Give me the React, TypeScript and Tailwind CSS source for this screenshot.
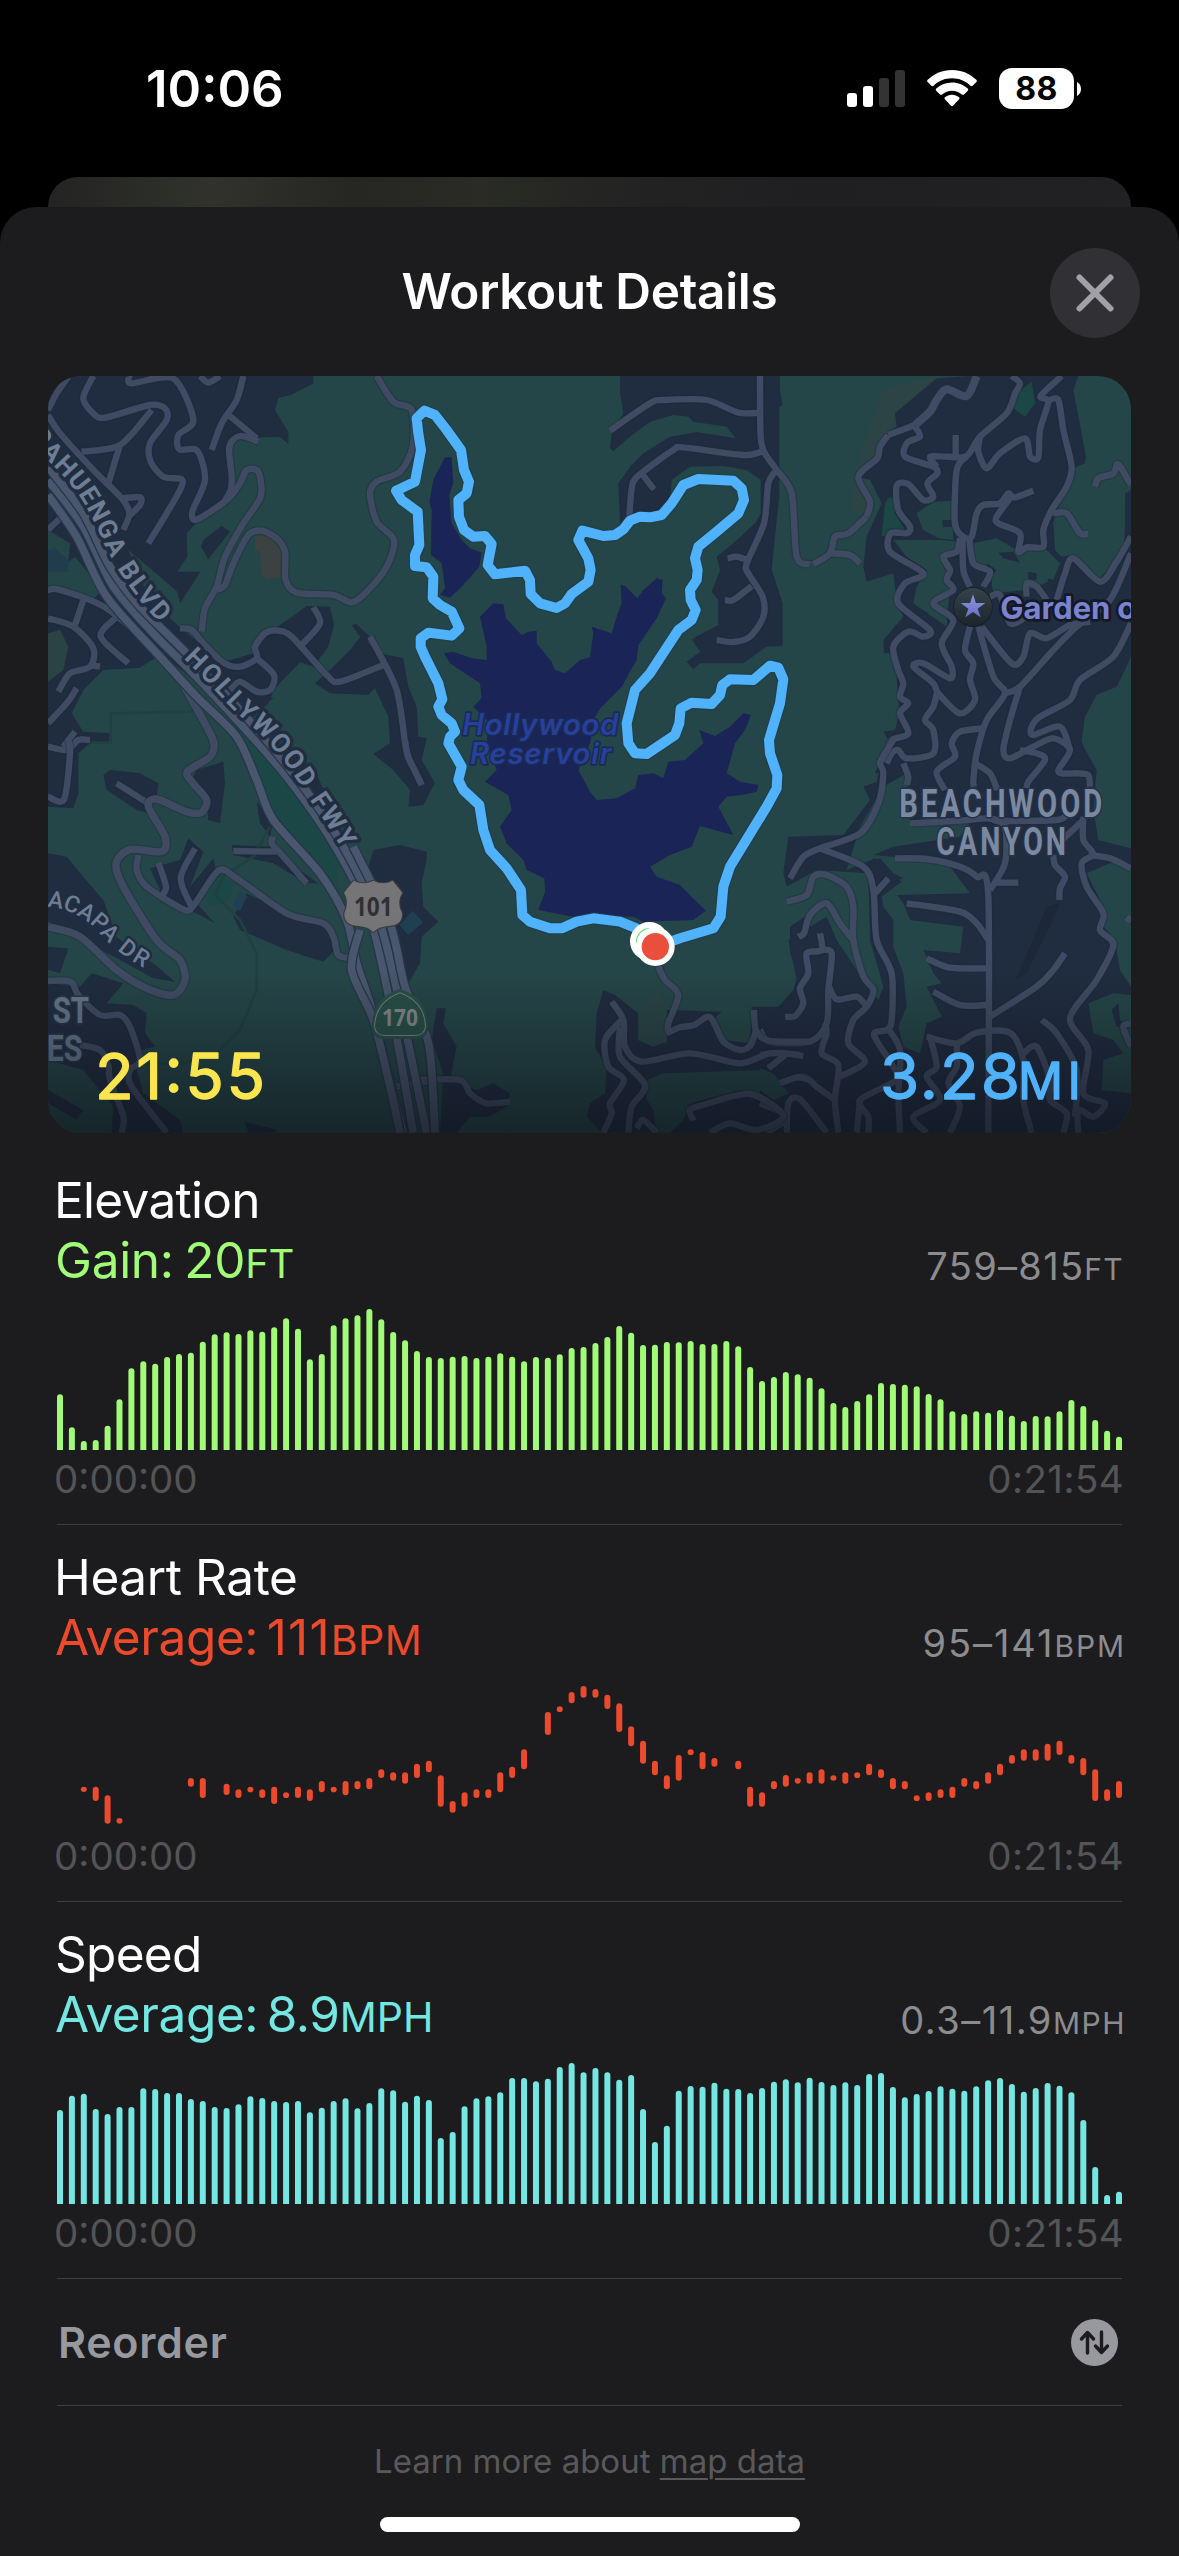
import type { ReactNode } from 'react';

/* ---------- chart data (pixels) ---------- */

const CHART_H = 141;
const STEP = 1059 / 89;

const elevation = [
  703, 802, 843, 840, 797, 718, 625, 604, 611, 591, 582, 578, 545, 523, 517, 522, 511, 515, 502, 475, 506, 598, 582,
  496, 475, 466, 447, 478, 516, 541, 573, 591, 594, 590, 588, 594, 590, 580, 590, 604, 591, 593, 583, 564, 561, 549,
  531, 498, 518, 555, 554, 546, 547, 543, 552, 552, 543, 559, 621, 663, 651, 636, 643, 653, 685, 729, 741, 723, 703,
  669, 672, 674, 679, 702, 718, 754, 762, 754, 758, 750, 767, 783, 768, 769, 754, 720, 738, 780, 812, 830,
].map((v, i) => [i, (v - 447) / 3, CHART_H]);

const speed = [
  600, 557, 551, 597, 612, 591, 591, 535, 537, 549, 549, 567, 573, 591, 594, 583, 559, 564, 573, 576, 573, 607, 593,
  573, 565, 595, 579, 535, 541, 575, 557, 570, 684, 666, 589, 565, 559, 547, 504, 504, 514, 506, 471, 459, 487, 474,
  487, 509, 495, 597, 696, 647, 542, 528, 530, 518, 536, 537, 549, 534, 515, 508, 517, 503, 516, 525, 517, 525, 492,
  489, 531, 562, 552, 543, 529, 536, 542, 529, 511, 504, 522, 545, 534, 519, 527, 547, 630, 771, 855, 845,
].map((v, i) => [i, (v - 459) / 3, CHART_H]);

const heart = [
  [2, 740, 756], [3, 740, 783], [4, 766, 851], [5, 834, 851], [11, 714, 740], [12, 714, 774], [14, 731, 765],
  [15, 748, 774], [16, 740, 757], [17, 748, 774], [18, 740, 792], [19, 757, 774], [20, 740, 774], [21, 748, 783],
  [22, 723, 757], [23, 740, 757], [24, 723, 766], [25, 723, 748], [26, 714, 748], [27, 688, 714], [28, 697, 722],
  [29, 697, 731], [30, 671, 714], [31, 662, 697], [32, 706, 800], [33, 783, 818], [34, 757, 800], [35, 748, 774],
  [36, 748, 774], [37, 697, 757], [38, 680, 714], [39, 628, 688], [41, 516, 585], [42, 499, 516], [43, 456, 490],
  [44, 438, 473], [45, 447, 473], [46, 464, 507], [47, 490, 576], [48, 559, 619], [49, 602, 671], [50, 662, 706],
  [51, 706, 748], [52, 645, 722], [53, 628, 645], [54, 636, 688], [55, 654, 680], [57, 662, 688], [58, 740, 800],
  [59, 757, 800], [60, 723, 748], [61, 705, 740], [62, 714, 731], [63, 697, 731], [64, 688, 731], [65, 706, 722],
  [66, 697, 731], [67, 697, 714], [68, 671, 706], [69, 688, 714], [70, 714, 748], [71, 723, 748], [72, 766, 783],
  [73, 757, 783], [74, 748, 774], [75, 740, 774], [76, 714, 740], [77, 723, 748], [78, 697, 731], [79, 671, 706],
  [80, 645, 671], [81, 628, 662], [82, 628, 662], [83, 611, 662], [84, 602, 645], [85, 645, 671], [86, 654, 706],
  [87, 688, 783], [88, 748, 783], [89, 723, 774],
].map(([i, a, b]) => [i, (a - 438) / 3, (b - 438) / 3]);

/* Rounded top bars that stand on the base line, or free floating capsules. */
function Bars({ data, color, floating }: { data: number[][]; color: string; floating?: boolean }) {
  return (
    <svg width="1065" height={CHART_H} viewBox={`0 0 1065 ${CHART_H}`} className="block overflow-hidden" fill={color}>
      {data.map(([i, top, bottom]) => (
        <rect key={i} x={i * STEP} y={top} width="6" height={bottom - top + (floating ? 0 : 6)} rx="3" />
      ))}
    </svg>
  );
}

/* ---------- map ---------- */

/* Catmull-Rom curve through a flat list of coordinates. */
function curve(points: string) {
  const n = points.trim().split(/\s+/).map(Number);
  const p: number[][] = [];
  for (let i = 0; i < n.length; i += 2) p.push([n[i], n[i + 1]]);
  let d = `M${p[0][0]} ${p[0][1]}`;
  const k = 7;
  for (let i = 0; i < p.length - 1; i++) {
    const a = p[i - 1] || p[i];
    const b = p[i];
    const c = p[i + 1];
    const e = p[i + 2] || c;
    d += `C${b[0] + (c[0] - a[0]) / k} ${b[1] + (c[1] - a[1]) / k} ${c[0] - (e[0] - b[0]) / k} ${c[1] - (e[1] - b[1]) / k} ${c[0]} ${c[1]}`;
  }
  return d;
}

function Tile({ x, y, children }: { x: number; y: number; children: ReactNode }) {
  return <g transform={`translate(${x} ${y}) scale(0.33333)`}>{children}</g>;
}

function Roads({ list, w = 19 }: { list: string[]; w?: number }) {
  return (
    <>
      {list.map((r, i) => (
        <path key={`s${i}`} d={curve(r)} stroke="#1a2c3c" strokeOpacity="0.35" strokeWidth={w + 8} />
      ))}
      {list.map((r, i) => (
        <path key={i} d={curve(r)} stroke="#404b63" strokeWidth={w} />
      ))}
    </>
  );
}

const NAVY = '#202c40';
const GREEN = '#254648';
const PARK = '#1b4747';

const roadsNW = [
  '24 120 50 70 85 20',
  '24 135 60 190 160 300 245 385 268 430 250 480',
  '160 18 130 85 165 135 200 142 330 105 375 115 380 150 330 220 332 275 370 320 425 328 420 360 380 430 325 520',
  '268 18 275 40 400 25 460 150 415 195 418 238 472 242 495 330 457 425 472 448 560 390 600 340 620 300 655 305 662 380 610 460 555 560 530 650 495 715 485 785',
  '610 18 590 90 545 160 515 240',
  '560 130 650 205',
  '655 215 600 198 568 230 575 320 572 360 550 400',
  '480 18 505 38 540 18',
  '335 120 240 225 125 245',
  '240 225 205 340',
  '245 385 300 382 300 405 265 440',
  '530 660 555 645 580 580 625 495 665 482 710 505 735 545 737 630 770 668 880 675 935 697 980 665 1040 590 1062 510 1010 455 990 370 1010 335 1080 305 1118 230 1115 120 1060 95 1010 18',
  '24 660 60 660 200 715 370 860',
  '24 745 100 770 160 835 150 890 90 910 55 965',
  '130 690 105 765',
  '225 745 182 800 265 880',
  '150 885 180 890',
  '24 1060 80 1000 110 955',
  '24 1130 80 1140 115 1110 150 1110',
  '70 1130 105 1085',
  '24 480 65 440',
  '420 775 455 780 490 820 550 878 600 890 650 865 645 830 675 790 715 782 755 800 860 915 900 935 1030 885',
  '650 865 702 915 690 960 650 965 600 935 570 960',
  '785 825 840 760 820 712',
  '990 800 1070 960 1100 1150 1125 1200 1145 1245',
];

const roadsN = [
  '1110 18 1112 200 1125 250 1160 300 1205 370 1220 560 1260 583',
  '660 182 780 100 820 90 950 90 1045 128 1110 128',
  '718 440 728 340 760 305 850 240 880 232 1060 255 1115 245',
  '755 310 792 358',
  '1160 300 1135 340 1122 460 1070 580 1075 610 1118 680 1120 740 1080 800 1030 816 980 810',
  '1013 565 1040 560 1072 570',
  '1085 648 1030 690 1005 690',
];

const roadsNE = [
  '385 195 465 165',
  '320 440 330 395 295 320 352 265 360 230 385 195',
  '160 583 210 550 225 500 265 490 320 440',
  '215 550 270 555 300 580',
  '465 170 480 200 442 218 435 260 520 290 532 310 502 340 520 380 490 390 445 342 410 347 415 420 450 470 440 490 392 490 390 545 490 610 435 640 415 700 510 780 490 800 445 785 400 830 415 900 430 940 420 980 445 1000 420 1030 445 1090 395 1110 380 1150 355 1180',
  '530 290 510 260 560 260 620 258 660 200 740 130 765 70 780 40 755 18',
  '587 195 587 255',
  '620 260 590 300 585 460 610 500 635 500 650 430 670 405 720 400 745 370 765 382 820 362',
  '660 200 655 245 680 295 720 250 795 205 810 260 835 262 840 180 865 95 842 78 905 18',
  '865 92 895 90 910 180 935 290 920 350 875 420 850 480 850 530 800 532 775 545 780 490 715 460 710 440 750 385',
  '880 430 920 430 960 490 985 490',
  '1005 350 1015 325 1060 310 1075 283 1113 345',
  '1113 500 1070 575 1020 635 940 565 915 610 890 690',
  '1113 550 1050 690 950 770 880 840 780 950 735 970',
  '600 505 590 545 550 560 570 600 560 630 580 660 520 700 580 750 545 820 575 890 570 925 490 880 460 890 520 940 535 970 600 1030 645 990 630 930 640 880 615 840 630 770',
  '608 505 610 600 630 650',
  '628 505 640 580 690 605 670 650',
  '690 680 720 675 750 760 800 740',
  '800 680 800 640 830 650 860 690',
  '655 770 700 920 735 970 680 1050 650 1150 640 1230 642 1250',
  '665 770 755 880 790 860 810 790 860 805 930 765 990 755',
  '780 950 750 1050 730 1140 750 1165 820 1130 880 1105 930 1140 895 1205 955 1210 985 1215 990 1250',
  '1113 760 1060 860 960 930 930 990 840 1040 815 1070 820 1095 900 1070 930 1140',
  '530 970 520 1010 495 1050 520 1080 520 1150 440 1165 415 1140 395 1150 380 1180',
  '670 1075 600 1085 575 1120 585 1160 530 1205 555 1260',
  '430 1180 445 1220 440 1245',
  '780 1140 830 1150 855 1170 805 1235 800 1255',
  '645 1180 690 1210 712 1260',
];

const roadsSE = [
  '400 0 375 40 360 70 370 100 355 190 300 280 180 325 130 350 90 415',
  '180 325 310 380 340 450 350 600 395 700 395 840 380 870 342 885 400 980 410 1020 300 1080 325 1130 325 1178',
  '345 460 385 415',
  '80 485 140 465 160 410 200 405 260 440 280 500 280 600 310 710 340 750 320 800 280 840 265 910 315 965 240 1010',
  '115 590 132 580 150 525 200 490 240 550 280 600',
  '180 580 185 630 140 640 145 700 120 745 130 790 105 828 75 830',
  '185 630 215 640 205 750 200 850 150 905 30 905 0 870',
  '205 735 230 778 290 770 320 800',
  '195 850 200 880 185 940 235 975 225 1080 235 1178',
  '60 1030 130 1010 170 1040 225 1080',
  '80 1178 85 1090 120 1078 200 1178',
  '0 1090 80 1130 20 1178',
  '0 945 60 938 130 948',
  '380 860 420 930 415 1060 420 1178',
  '300 1080 290 1178',
  '405 355 500 357 600 380 650 410 685 470 685 1178',
  '440 490 600 515 650 550 685 600',
  '500 655 570 683 685 685',
  '520 755 600 795 685 795',
  '690 830 830 740 880 690 915 640',
  '690 450 735 370 735 260 700 240',
  '700 428 775 428',
  '450 250 600 242 680 235 735 243 890 240 920 225',
  '880 345 885 375 915 410 900 445 898 480',
  '970 230 970 300 1000 342 965 370 980 440 1030 520 1020 570 1060 615 1010 720 930 835 985 930 970 1060 1035 1090 1000 1130 955 1110 955 1178',
  '985 345 1050 355 1113 385',
  '965 245 885 320',
  '845 840 890 880 950 990 945 1130',
  '500 890 590 910 650 878 750 878 790 960 790 1080 815 1178',
  '790 940 830 920 870 1020 870 1080 920 1120 910 1178',
  '510 890 530 980 500 1010 540 1080 460 1130 500 1178',
  '590 910 590 980 565 1030 600 1100 570 1178',
  '1113 530 1100 545',
  '1113 920 1090 860 1113 850',
];

const roadsS = [
  '805 680 825 720 865 765 835 850 835 878',
  '830 880 870 862 910 856 960 832 1000 905 1050 930 1082 915 1098 870',
  '1092 810 1098 870 1135 902 1260 905',
  '665 785 700 840 705 920 755 965 900 940 1050 970 1140 940 1230 945',
  '695 840 645 900 655 980 702 1020 660 1090 665 1120 640 1178',
  '690 860 690 950 765 1035 725 1100 715 1178',
  '1185 945 1135 985',
  '910 1142 900 1110 940 1095 1080 1062 1180 1128 1100 1170 1020 1150 960 1178',
  '740 1165 760 1140 800 1178',
  '1170 1030 1220 1012 1260 1020',
];

const roadsSW = [
  '230 130 325 190',
  '295 345 290 390 320 440 430 508 460 498 535 392 590 415 740 520 850 550 880 590 895 645 935 655',
  '355 368 378 440 365 470',
  '465 325 422 415 455 500',
  '580 333 710 335',
  '700 290 695 310 730 350 800 430',
  '24 723 92 725 115 765 180 825 240 825 270 860 300 960 270 990 275 1040 380 1178',
  '120 915 180 930 205 975 210 1020 250 1130 245 1178',
  '24 170 72 178 90 40 85 0',
  '1035 1045 1190 1020',
  '1125 1020 1260 1020 1290 1060 1340 1090 1410 1085',
];

const ROUTE =
  'M780 1715L740 1675L690 1655L610 1645L560 1655L515 1675L480 1675L420 1655L397 1635L393 1560L350 1495L300 1440L280 1380L268 1305L220 1260L205 1230L215 1190L175 1120L180 1100L195 1085L185 1060L155 1035L145 1010L157 988L145 940L105 860L92 830L92 805L115 788L185 797L208 775L185 725L150 705L128 685L130 620L110 592L75 588L75 555L88 525L83 425L35 390L18 362L75 335L93 240L85 190L80 145L103 122L135 135L170 180L213 240L222 300L237 335L230 370L205 390L207 440L222 480L250 500L285 498L305 522L293 585L315 613L405 602L420 630L422 672L450 700L500 714L525 700L545 672L595 635L602 600L595 565L565 510L577 482L640 498L675 495L700 478L720 452L750 440L780 442L815 435L845 400L880 345L925 327L1030 332L1055 355L1062 390L1045 430L980 485L925 530L915 565L923 600L920 630L900 660L902 690L917 720L905 750L865 780L780 910L735 960L710 1060L715 1120L735 1150L770 1152L855 1095L868 1060L872 1015L905 998L965 1002L990 975L997 945L1020 928L1090 930L1140 887L1165 893L1180 928L1170 1000L1137 1110L1140 1150L1162 1215L1160 1255L1130 1310L1020 1490L1000 1550L992 1640L970 1675L870 1705L800 1730';

function MapView() {
  return (
    <svg viewBox="48 376 1083 757" className="block h-[757px] w-[1083px] rounded-[33px]">
      <defs>
        <linearGradient id="fade" x1="0" y1="0" x2="0" y2="1">
          <stop offset="0" stopColor="#0b0f16" stopOpacity="0" />
          <stop offset="1" stopColor="#0b0f16" stopOpacity="0.58" />
        </linearGradient>
        <linearGradient id="star" x1="0" y1="0" x2="0" y2="1">
          <stop offset="0" stopColor="#9095da" />
          <stop offset="1" stopColor="#656fc8" />
        </linearGradient>
        <linearGradient id="pin" x1="0" y1="0" x2="0" y2="1">
          <stop offset="0" stopColor="#36434b" />
          <stop offset="1" stopColor="#1b2429" />
        </linearGradient>
        <path id="cahuenga" d={curve('-8 175 20 225 70 278 110 322 145 368 175 420 205 480 228 530 268 600 300 645 335 690 378 738 400 765')} />
        <path id="hollywood" d={curve('450 845 470 865 520 915 585 985 625 1022 680 1072 725 1122 770 1178 805 1232 850 1300 885 1350 925 1415 950 1465')} />
        <path id="acapa" d={curve('25 478 50 480 95 492 140 515 180 545 215 583 270 630 320 662 350 685')} />
      </defs>

      <rect x="48" y="376" width="1083" height="757" fill={GREEN} />

      {/* residential land */}
      <Tile x={40} y={370}>
        <g fill={NAVY}>
          <path d="M24 18H820V40L760 72L715 85L705 120L745 185V222L720 200L600 205L570 230L575 340L560 390L520 430L470 458L440 490L442 560L412 605H482L420 700L412 665L365 625L265 540L330 690L440 790L520 850L600 930L700 985L620 1040L700 1120L820 1190L930 1440L960 1480L900 1480L780 1290L640 1110L500 960L360 850L240 760L160 690L185 660L105 560L85 575L90 520L24 480Z" />
          <path d="M24 655L185 690L350 860L300 893L190 900L130 960L95 1030L130 1085L210 1090L205 1118L150 1120L115 1150V1270L100 1315L24 1310Z" />
          <path d="M490 510L545 467L570 485L505 568L483 530Z" />
          <path d="M540 880L640 850L690 785L750 745L800 708L870 710L882 765L865 830L820 890L780 877L700 960L685 1000L620 1060L540 960Z" />
          <path d="M935 765L950 762L990 800L985 820L1020 850L1090 865L1105 950L1130 1010L1135 1100L1160 1105L1145 1170L1185 1240L1150 1305L1105 1310L1110 1260L1060 1200L1000 1152L1050 1120L1045 1040L1005 955L985 975L870 970L825 940L870 900L935 835L960 800Z" />
        </g>
        <path d="M24 790L60 780L85 830L70 900L24 935Z" fill="#2a4446" />
        <path d="M24 540L45 535L85 570V605H24Z" fill="#213c4d" />
        <path d="M645 498L690 497L725 545L722 620L680 630L665 610L660 545L645 540Z" fill="#3c4242" />
      </Tile>
      <Tile x={390} y={370}>
        <g fill={NAVY}>
          <path d="M690 18H1170V60L1178 105L1168 110V380L1160 450L1145 600L1155 630L1178 700V828L1130 830L1060 880H930L910 898L890 875L930 845L905 808L985 765V690L965 665L990 600L980 560L1030 520L1095 460L1112 430V330L1070 300L1000 288L900 290L845 330L840 400L800 450L690 460L685 340L720 290L760 250L840 200L920 186L1037 205L1010 170L910 155L895 140L850 135L780 155L720 200L670 243L660 235L665 190L700 130L690 70Z" />
        </g>
        <g fill="#1a2456">
          <path d="M165 262H185L190 340L178 375L185 460L215 510L240 535L275 548L268 590L215 650L180 683L150 675L165 655L155 580L123 555L125 420L118 395L130 330L145 300Z" />
          <path d="M310 700L340 703L348 745L395 795L415 785L440 782V820L485 875L495 900L525 910L570 870L600 862L610 790L605 770L665 790L680 740L695 700L692 645L705 648L742 685L760 660L800 625L818 630L815 670L828 685L800 745L745 825L740 870L695 950L635 1010L615 1040L600 1120L565 1200L600 1265L620 1290L680 1285L735 1255L745 1215L790 1210L820 1225L835 1175L885 1170L940 1120L928 1080L975 1098L1020 1070L1060 1030L1083 1035L1065 1080L1035 1120L1010 1210L1050 1235L1105 1245L1100 1265L1055 1275L1010 1280L985 1310L1030 1395L1010 1390L930 1368L905 1430L840 1455L780 1490L800 1520L870 1545L905 1580L948 1622L910 1650L760 1655L730 1640L550 1640L445 1620L465 1565L463 1525L410 1500L400 1470L350 1420L330 1370L365 1320L355 1275L285 1235L320 1200L290 1110L300 1060L250 1010L275 985L270 940L180 880L162 850L190 845L245 865L290 870V830L270 740Z" />
        </g>
      </Tile>
      <Tile x={760} y={370}>
        <path d="M370 60L530 18L410 130L350 260L320 440L270 420L300 250Z" fill="#2c4446" />
        <g fill={NAVY}>
          <path d="M530 25L630 18H955L940 60L965 190L978 260L975 280L940 295L925 350L890 420L880 460L885 540L905 560L940 555L1010 640L1050 590L1090 560L1095 470V370L1113 360V860L1095 900L1070 950L1010 975L975 1040L965 1110L985 1210H345L385 1110L370 1085L405 1080L418 1030L405 850L372 850L370 810L430 740L410 690L400 610L320 635L310 590L320 500L365 400L330 330L290 320L350 260L380 190L410 170L405 130Z" />
        </g>
        <g fill={GREEN}>
          <path d="M470 430L520 395L575 392L580 510L535 505L490 480Z" />
          <path d="M400 510L545 510L600 515L590 540L545 560L570 640L560 770L460 700L470 650L500 600L440 560Z" />
          <path d="M640 520L710 505L770 540L850 530L900 580L880 630L800 660L700 670L690 600L645 590Z" />
        </g>
        <path d="M715 548L760 545L780 578L730 565ZM805 605L830 610V630L805 628ZM865 625L895 635L885 660L860 650ZM680 580L710 600L690 620ZM548 450L575 450V470L548 472Z" fill={NAVY} />
        <g fill={PARK}>
          <path d="M385 385L405 378V430L435 480L380 500L365 498L375 400Z" />
          <path d="M765 75L815 35L825 100L795 140L760 115Z" />
        </g>
      </Tile>
      <Tile x={40} y={740}>
        <g fill={NAVY}>
          <path d="M24 340L80 350L130 410L190 480L230 590L290 640L340 670L405 725L340 715L240 660L24 545Z" />
          <path d="M190 105L210 90L300 100L355 130L350 170L320 218L290 210L200 150Z" />
          <path d="M470 90L550 65L555 130L540 250L505 240L500 180L450 130Z" />
          <path d="M330 385L420 360L445 295L490 335L450 440L520 355L530 400L470 490L525 550L450 510L370 470Z" />
          <path d="M575 315L700 320L720 350L835 430H800L700 370L580 345Z" />
          <path d="M650 185L700 240L690 290L660 250Z" />
          <path d="M580 530L620 460L740 520L850 545L885 630L850 665L740 630L600 570Z" />
          <path d="M1000 330L1080 315L1160 335V360L1145 430L1150 500L1195 545L1145 590L1140 670L1105 730L1080 740L980 400Z" />
          <path d="M24 620L85 625L60 700L24 690Z" />
          <path d="M24 730L120 740L155 700L250 730L200 790L280 795L320 820L315 880L345 920L300 930L290 990L310 1060L420 1140L430 1178H215L220 1100L130 990L24 960Z" />
          <path d="M24 1050L130 1110L110 1140L24 1090ZM615 1145L715 1170L700 1178H625Z" />
        </g>
        <g fill={PARK}>
          <path d="M520 -140L640 0L760 130L900 330L890 440L720 280L670 130L610 0Z" />
          <path d="M540 400L580 430L570 480L510 500L495 470Z" />
        </g>
        <path d="M600 455L622 468L600 515L578 495ZM1078 555L1118 512L1150 547L1105 585Z" fill="#203f52" />
      </Tile>
      <Tile x={390} y={740}>
        <g fill={NAVY}>
          <path d="M640 750L675 765L745 820V900L790 920L830 905V810L995 815L970 840L1000 900L1080 910L1085 800H1165L1210 750L1225 700L1200 640V560L1260 520V1178H635L590 1130L600 1090L645 1060L650 985L615 920L620 820Z" />
          <path d="M140 805H168L160 850L200 920L180 1020L260 1050L310 1030L360 1060L350 1100L300 1130H240L200 1178H150L160 1000L125 900Z" />
        </g>
        <path d="M770 1020L820 1000L1130 990L1195 1060L1150 1075L1050 1050L900 1090L880 1140L840 1178H800L790 1110L770 1080Z" fill={GREEN} />
        <path d="M745 800L800 750L830 800V905L785 918L745 900Z" fill="#2a4546" />
      </Tile>
      <Tile x={760} y={740}>
        <g fill={NAVY}>
          <path d="M370 50L385 0H960L1010 90L1000 210L1015 300L1113 325V1178H0V860L60 805L90 780L110 720L85 600L150 560L200 530L230 600L290 690L355 780L370 740L330 600L325 400L170 390L80 440L70 400L85 290L250 285L330 180L310 140L350 125Z" />
        </g>
        <g fill={GREEN}>
          <path d="M370 140L440 100L450 240L630 250L600 290L400 320L340 345L500 360L570 380L630 460L410 465L430 490L450 540L610 560L600 640L490 630L520 700L545 730L500 740L545 830L500 850L480 940L430 920L415 860L440 800L430 700L400 620V540L370 500L365 470L425 425L345 355L260 390L300 260Z" />
          <path d="M980 400L1060 365L1113 390V740L1080 690L1065 600L1030 560L1020 480Z" />
          <path d="M985 790L1060 760L1113 765V1060L1025 1050L1030 960L1090 940L1060 900L1000 880Z" />
          <path d="M0 985L40 1000L85 1060L40 1080L0 1050Z" />
        </g>
        <path d="M1055 810L1075 790L1080 840L1110 870L1070 860ZM340 360L360 355L400 400L430 415L380 430L345 460L330 380Z" fill={NAVY} />
        <path d="M770 715L860 500L900 490L870 560L800 700Z" fill="#1c2739" />
      </Tile>

      {/* roads */}
      <g fill="none" strokeLinejoin="round">
        <Tile x={40} y={370}>
          <path d="M155 1118H212V1030L450 1025L500 980M690 1370L640 1460L550 1520L525 1575L600 1650L650 1750V1860L600 1980L530 2050L430 2080H300" stroke="#214040" strokeWidth="8" />
          <Roads list={roadsNW} />
        </Tile>
        <Tile x={390} y={370}><Roads list={roadsN} /></Tile>
        <Tile x={760} y={370}>
          <Roads list={roadsNE} />
          <path d={curve('465 165 510 125 530 90 560 58 620 78 650 18')} stroke="#404b63" strokeWidth="24" />
        </Tile>
        <Tile x={760} y={740}><Roads list={roadsSE} /></Tile>
        <Tile x={390} y={740}><Roads list={roadsS} /></Tile>
        <Tile x={40} y={740}>
          <Roads list={roadsSW} />
          <Roads w={22} list={['430 -165 500 -40 522 10 510 50 442 95 460 130 500 180 485 217 440 215 350 177 325 200 375 290 365 335 270 328 228 370 250 440 350 600 420 660 435 720 400 765 320 745 230 690 120 590 24 560']} />
          <Roads list={['1095 0 1105 50 1145 135']} />
        </Tile>
        {/* freeway lanes */}
        <Tile x={40} y={370}>
          {[
            '24 375 110 500 200 680 360 860 470 980 590 1100 650 1230 700 1350 840 1510 920 1650 950 1780 990 1900 1040 2100 1090 2288',
            '24 330 130 470 220 650 340 790 450 900 600 1060 740 1220 880 1420 990 1640 1060 1950 1120 2288',
            '24 290 130 430 210 590 300 710 440 850 640 1065 790 1250 910 1430 1020 1660 1090 1950 1160 2288',
            '940 1430 1050 1660 1095 1850 1160 2000 1175 2100 1185 2288',
            '960 1680 935 1800 1000 1950 1050 2150 1080 2288',
          ].map((r) => (
            <g key={r}>
              <path d={curve(r)} stroke="#26364a" strokeWidth="31" />
              <path d={curve(r)} stroke="#49566d" strokeWidth="23" />
            </g>
          ))}
        </Tile>
      </g>

      {/* place and street labels */}
      <g fontFamily="Roboto, sans-serif" paintOrder="stroke" strokeLinejoin="round">
        <Tile x={40} y={370}>
          <g fontSize="79" fontWeight="700" fill="#6d7d94" stroke={NAVY} strokeWidth="20">
            <text dy="28"><textPath href="#cahuenga" textLength="690">CAHUENGA BLVD</textPath></text>
            <text dy="28"><textPath href="#hollywood" textLength="755">HOLLYWOOD FWY</textPath></text>
          </g>
        </Tile>
        <Tile x={40} y={740}>
          <text dy="24" fontSize="70" fontWeight="500" fill="#6d7d94" stroke={NAVY} strokeWidth="14">
            <textPath href="#acapa" textLength="360">ACAPA DR</textPath>
          </text>
          <g fontWeight="700" fontSize="112" fill="#67768b" stroke="#26394a" strokeWidth="10">
            <text x="38" y="848" textLength="109" lengthAdjust="spacingAndGlyphs">ST</text>
            <text x="20" y="962" textLength="107" lengthAdjust="spacingAndGlyphs">ES</text>
          </g>
        </Tile>
        <Tile x={760} y={740}>
          <g fontWeight="700" fontSize="114" letterSpacing="12" fill="#7b89a0" stroke="#26324a" strokeWidth="10">
            <text x="418" y="232" textLength="618" lengthAdjust="spacingAndGlyphs">BEACHWOOD</text>
            <text x="529" y="346" textLength="398" lengthAdjust="spacingAndGlyphs">CANYON</text>
          </g>
        </Tile>
        <Tile x={390} y={370}>
          <g fontFamily="Inter, sans-serif" fontStyle="italic" fontWeight="600" fontSize="88" fill="#27409c" stroke="#1b2a55" strokeWidth="10">
            <text x="217" y="1096" textLength="468">Hollywood</text>
            <text x="240" y="1183" textLength="424">Reservoir</text>
          </g>
        </Tile>
        <Tile x={760} y={370}>
          <circle cx="639" cy="711" r="57" fill="url(#pin)" stroke="#141c22" strokeWidth="4" />
          <path d="M639 673L647.600 699H676L653 716L662 742L639 726L616 742L625 716L602 699H630.400Z" fill="url(#star)" />
          <g fontFamily="Inter, sans-serif" fontWeight="700" fontSize="93" fill="#7b83cf" stroke="#141925" strokeWidth="16">
            <text x="721" y="746" textLength="330">Garden</text>
            <text x="1072" y="746">o</text>
          </g>
        </Tile>
        {/* highway shields */}
        <Tile x={40} y={740}>
          <path d="M912 458L941 422Q970 438 1000 422Q1030 438 1058 422L1087 458Q1068 485 1086 520Q1088 556 1045 558Q1015 560 1000 576Q985 560 955 558Q912 556 913 520Q930 485 912 458Z" fill="#757577" stroke="#3a3b3f" strokeWidth="7" />
          <text x="942" y="528" textLength="116" lengthAdjust="spacingAndGlyphs" fontFamily="Open Sans, sans-serif" fontSize="78" fontWeight="700" fill="#303033">101</text>
          <path d="M1080 752Q1158 778 1160 862Q1158 891 1128 892H1032Q1002 891 1000 862Q1002 778 1080 752Z" fill="#285047" stroke="#285047" strokeWidth="10" />
          <path d="M1080 760Q1152 786 1155 860Q1152 884 1126 885H1034Q1008 884 1005 860Q1008 786 1080 760Z" fill="#285047" stroke="#7c8385" strokeWidth="6" />
          <text x="1026" y="859" textLength="108" lengthAdjust="spacingAndGlyphs" fontFamily="Open Sans, sans-serif" fontSize="68" fontWeight="700" fill="#858a90">170</text>
        </Tile>
      </g>

      {/* route */}
      <Tile x={390} y={370}>
        <path d={ROUTE} fill="none" stroke="#1d3a4c" strokeOpacity="0.5" strokeWidth="38" strokeLinejoin="round" />
        <path d={ROUTE} fill="none" stroke="#50b2fb" strokeWidth="30" strokeLinejoin="round" />
      </Tile>

      <rect x="48" y="970" width="1083" height="163" fill="url(#fade)" />

      <Tile x={390} y={740}>
        <circle cx="778" cy="604" r="58" fill="#fff" />
        <circle cx="778" cy="604" r="38" fill="none" stroke="#6fd873" strokeWidth="4" />
        <circle cx="796" cy="620" r="58" fill="#fff" />
        <circle cx="796" cy="620" r="41" fill="#ea4e3d" />
      </Tile>

      {/* totals */}
      <g fontFamily="Inter, sans-serif" fontWeight="400" strokeLinejoin="round" strokeLinecap="round" strokeWidth="1.3">
        <text x="95" y="1098.500" fontSize="63.500" textLength="170" fill="#fbe54e" stroke="#fbe54e">21:55</text>
        <text x="880" y="1098.500" fontSize="63.500" textLength="140" fill="#50b2fb" stroke="#50b2fb">3.28</text>
        <text x="1018" y="1098.500" fontSize="50" textLength="63" fill="#50b2fb" stroke="#50b2fb">MI</text>
      </g>
    </svg>
  );
}

/* ---------- screen parts ---------- */

function StatusBar() {
  return (
    <div className="flex h-[177px] items-center justify-between pr-[98px] pl-[146px] text-white">
      <span className="text-[51px] leading-[60px] font-semibold">10:06</span>
      <div className="flex items-center">
        <svg width="58" height="38" viewBox="0 0 58 38" className="mr-[22px] block" fill="#fff">
          <rect x="0" y="23" width="10" height="14" rx="3" />
          <rect x="16" y="16" width="10" height="21" rx="3" />
          <rect x="32" y="8" width="10" height="29" rx="3" fill="#333" />
          <rect x="48" y="0" width="10" height="37" rx="3" fill="#333" />
        </svg>
        <svg width="50" height="37" viewBox="0 0 50 37" className="mr-[22px] block" fill="#fff">
          <path d="M25 0C34.500 0 43 3.700 49.300 9.800C50 10.500 50 11.300 49.400 12L45.600 15.700C45 16.300 44.100 16.300 43.500 15.700C38.500 11 32.100 8.300 25 8.300S11.500 11 6.500 15.700C5.900 16.300 5 16.300 4.400 15.700L.6 12C0 11.300 0 10.500.7 9.800C7 3.700 15.500 0 25 0Z" />
          <path d="M25 12.500C31 12.500 36.500 14.800 40.700 18.600C41.400 19.200 41.400 20 40.800 20.700L37 24.400C36.400 25 35.500 25 34.800 24.500C32.200 22.200 28.800 20.800 25 20.800S17.800 22.200 15.200 24.500C14.500 25 13.600 25 13 24.400L9.200 20.700C8.600 20 8.600 19.200 9.300 18.600C13.500 14.800 19 12.500 25 12.500Z" />
          <path d="M25 24.800C27.700 24.800 30.100 25.700 32 27.200C32.700 27.800 32.700 28.700 32.100 29.300L26.200 35.400C25.500 36.100 24.500 36.100 23.800 35.400L17.900 29.300C17.300 28.700 17.300 27.800 18 27.200C19.900 25.700 22.300 24.800 25 24.800Z" />
        </svg>
        <div className="flex h-[41px] w-[75px] items-center justify-center rounded-[13px] bg-white text-[32px] leading-[41px] font-bold tracking-[0.500px] text-black">88</div>
        <svg width="4" height="14" viewBox="0 0 4 14" className="ml-[3px] block" fill="#fff">
          <path d="M0 0C2.500 1.200 4 4 4 7S2.500 12.800 0 14Z" />
        </svg>
      </div>
    </div>
  );
}

type MetricProps = {
  title: ReactNode;
  summary: ReactNode;
  range: ReactNode;
  children: ReactNode;
};

function Metric({ title, summary, range, children }: MetricProps) {
  return (
    <section className="flex h-[377px] flex-col border-b border-[#3d3d40] whitespace-nowrap">
      <h2 className="mt-[22px] text-[49.500px] leading-[61px] text-white">{title}</h2>
      <div className="flex h-[61px] items-center justify-between">
        <p className="pt-[1px] text-[49.500px] leading-[61px]">{summary}</p>
        <p className="pt-[12px] text-[38px] leading-[48px] text-[#8c8c8f]">{range}</p>
      </div>
      <div className="mt-[17px]">{children}</div>
      <div className="flex justify-between text-[38.500px] leading-[58px] text-[#545457]">
        <span className="-ml-[3px]">0:00:00</span>
        <span className="-mr-[2px] tracking-[0.4px]">0:21:54</span>
      </div>
    </section>
  );
}

export default function App() {
  return (
    <div className="flex h-[2556px] w-[1179px] flex-col overflow-hidden bg-black font-['Inter',sans-serif]">
      <StatusBar />
      <div className="mx-[48px] h-[30px] shrink-0 rounded-t-[30px] bg-[linear-gradient(90deg,#232423_0%,#30322b_15%,#262623_28%,#292b24_40%,#222223_56%,#1f1f21_70%,#212123_100%)]" />
      <main className="flex flex-1 flex-col rounded-t-[36px] bg-[#1c1c1e]">
        <header className="grid h-[169px] grid-cols-[1fr_auto_1fr] items-center px-[39px]">
          <span />
          <h1 className="-mt-[2px] text-[49.500px] leading-[60px] font-semibold tracking-[-0.300px] text-white">Workout Details</h1>
          <button className="mt-[3px] flex size-[90px] items-center justify-center justify-self-end rounded-full bg-[#313135]">
            <svg width="40" height="40" viewBox="0 0 40 40" stroke="#a1a1a7" strokeWidth="6" strokeLinecap="round">
              <path d="M4.500 4.500L35.500 35.500M35.500 4.500L4.500 35.500" />
            </svg>
          </button>
        </header>
        <div className="mx-[48px]">
          <MapView />
        </div>
        <div className="mt-[15px] mr-[57px] ml-[57px] flex flex-col">
          <Metric
            title={<span className="-ml-[3px] tracking-[-0.700px]">Elevation</span>}
            summary={<span className="-ml-[2px] tracking-[-0.300px] [word-spacing:-3px] text-[#a1fb76]">Gain: 20<span className="text-[40px]">FT</span></span>}
            range={<span className="-mr-[2px] tracking-[1.300px]">759–815<span className="text-[30px]">FT</span></span>}
          >
            <Bars data={elevation} color="#a1fb76" />
          </Metric>
          <Metric
            title={<span className="-ml-[3px] tracking-[-0.400px]">Heart Rate</span>}
            summary={
              <span className="-ml-[2px] text-[#ec4a2c]">
                <span className="tracking-[-0.400px] [word-spacing:-5px]">Average: </span>
                <span className="tracking-[1.200px]">111</span>
                <span className="text-[41px] tracking-[0.500px]">BPM</span>
              </span>
            }
            range={<span className="-mr-[4px] tracking-[1.900px]">95–141<span className="text-[30px]">BPM</span></span>}
          >
            <Bars data={heart} color="#ec4a2c" floating />
          </Metric>
          <Metric
            title={<span className="-ml-[2px] tracking-[-0.700px]">Speed</span>}
            summary={
              <span className="-ml-[2px] text-[#74e7e2]">
                <span className="tracking-[-0.400px] [word-spacing:-5px]">Average: </span>
                <span className="tracking-[-0.400px]">8.9</span>
                <span className="text-[41px]">MPH</span>
              </span>
            }
            range={<span className="-mr-[4px] tracking-[1.500px]">0.3–11.9<span className="text-[30px]">MPH</span></span>}
          >
            <Bars data={speed} color="#74e7e2" />
          </Metric>
          <div className="flex h-[127px] items-center justify-between border-b border-[#3d3d40] pr-[4px]">
            <span className="ml-[1px] text-[43px] leading-[52px] font-semibold tracking-[0.700px] text-[#98989f]">Reorder</span>
            <svg width="47" height="47" viewBox="0 0 47 47" fill="none">
              <circle cx="23.500" cy="23.500" r="23.500" fill="#98989f" />
              <path d="M16.500 34V14M10.500 20L16.500 13.500L22.500 20M30.500 13V33M24.500 27L30.500 33.500L36.500 27" stroke="#1c1c1e" strokeWidth="3.400" strokeLinecap="round" strokeLinejoin="round" />
            </svg>
          </div>
        </div>
        <p className="mt-[34px] text-center text-[33px] leading-[42px] text-[#59595c]">
          Learn more about <span className="underline decoration-2 underline-offset-[5px]">map data</span>
        </p>
        <div className="mx-auto mt-[35px] h-[15px] w-[420px] rounded-full bg-white" />
      </main>
    </div>
  );
}
